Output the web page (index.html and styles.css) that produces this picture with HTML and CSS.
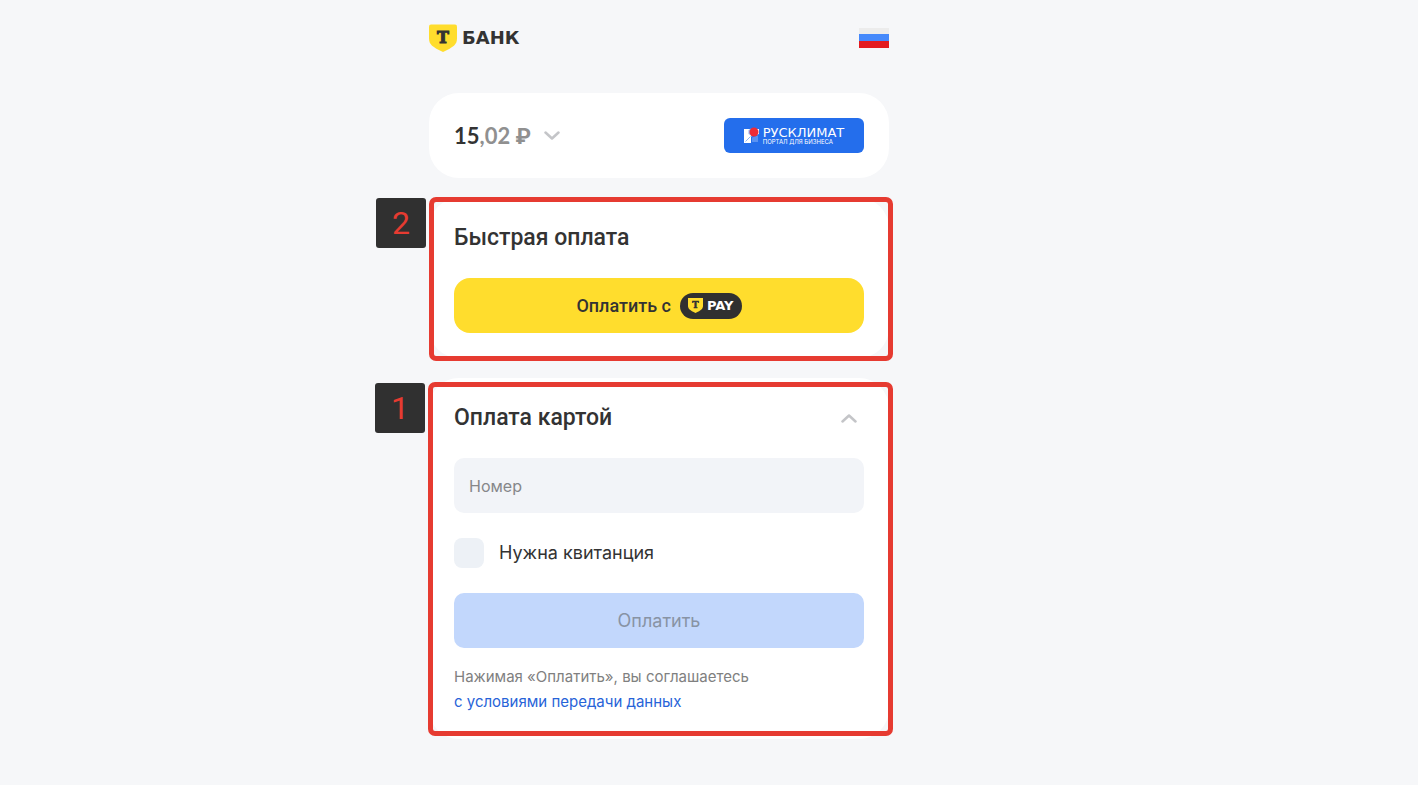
FILE: index.html
```html
<!DOCTYPE html>
<html lang="ru">
<head>
    <meta charset="UTF-8">
    <meta name="viewport" content="width=device-width, initial-scale=1.0">
    <title>Оплата</title>
    <link rel="stylesheet" href="styles.css">
</head>
<body>
    <div class="page">
        <header class="header">
            <a href="#" class="logo">
                <svg class="logo-shield" viewBox="0 0 28 28" aria-hidden="true">
                    <path d="M2 0.5H26Q28 0.5 28 2.5V14.5C28 20.5 24.5 23 14 28C3.5 23 0 20.5 0 14.5V2.5Q0 0.5 2 0.5Z" fill="#ffdd2d"/>
                    <text x="14" y="19" class="shield-letter">T</text>
                </svg>
                <span class="logo-name">БАНК</span>
            </a>
            <button class="lang-button" aria-label="Русский">
                <svg class="flag" viewBox="0 0 30 20">
                    <rect width="30" height="7" fill="#ececec"/>
                    <rect y="6" width="30" height="7" fill="#4589fb"/>
                    <rect y="13" width="30" height="7" fill="#e31b20"/>
                </svg>
            </button>
        </header>

        <main class="cards">
            <!-- Order summary -->
            <section class="card summary">
                <button class="amount">
                    <span class="sum">15<span class="kopeks">,02 ₽</span></span>
                    <svg class="chevron" viewBox="0 0 16 9" aria-hidden="true">
                        <path d="M1.5 1.5L8 7.5L14.5 1.5"/>
                    </svg>
                </button>
                <div class="merchant">
                    <svg class="merchant-icon" viewBox="0 0 16 17" aria-hidden="true">
                        <path d="M0 2H15V16H0Z" fill="#fff"/>
                        <path d="M7 9.5L15 7V16H7Z" fill="#246eec"/>
                        <path d="M8 10.5L14 8.5V15H8Z" fill="#5a92f2"/>
                        <path d="M1.5 14.5L6.5 9.5" stroke="#8fb5f6" fill="none"/>
                        <path d="M4.5 3L7 1.5L8 9L4.5 7Z" fill="#8fb5f6"/>
                        <circle cx="10" cy="5" r="4.5" fill="#ef2b36"/>
                    </svg>
                    <div class="merchant-text">
                        <span class="merchant-name">РУСКЛИМАТ</span>
                        <span class="merchant-note">ПОРТАЛ ДЛЯ БИЗНЕСА</span>
                    </div>
                </div>
            </section>

            <!-- Fast payment -->
            <section class="card marked marked-fast">
                <span class="step">2</span>
                <h2>Быстрая оплата</h2>
                <button class="tpay-button">
                    Оплатить с
                    <span class="tpay">
                        <svg class="tpay-shield" viewBox="0 0 28 28" aria-hidden="true">
                            <path d="M0 0H28V14.5C28 20.5 24.5 23 14 28C3.5 23 0 20.5 0 14.5Z" fill="#ffdd2d"/>
                            <text x="14" y="19" class="shield-letter">T</text>
                        </svg>
                        PAY
                    </span>
                </button>
            </section>

            <!-- Card payment -->
            <section class="card marked marked-card">
                <span class="step">1</span>
                <div class="card-head">
                    <h2>Оплата картой</h2>
                    <button class="collapse" aria-label="Свернуть">
                        <svg class="chevron" viewBox="0 0 16 9" aria-hidden="true">
                            <path d="M1.5 7.5L8 1.5L14.5 7.5"/>
                        </svg>
                    </button>
                </div>
                <form class="pay-form">
                    <input type="text" class="card-number" placeholder="Номер" aria-label="Номер">
                    <label class="receipt">
                        <input type="checkbox" class="receipt-box">
                        Нужна квитанция
                    </label>
                    <button type="submit" class="pay-button" disabled>Оплатить</button>
                </form>
                <p class="terms">Нажимая «Оплатить», вы соглашаетесь<br><a href="#">с условиями передачи данных</a></p>
            </section>
        </main>
    </div>
</body>
</html>
```
FILE: styles.css
```css
* {
    margin: 0;
    padding: 0;
    box-sizing: border-box;
}

body {
    background: #f6f7f9;
    font-family: Inter, 'Liberation Sans', sans-serif;
    color: #333;
    min-height: 100vh;
}

button {
    border: none;
    background: none;
    font-family: inherit;
    color: inherit;
    cursor: pointer;
}

.page {
    padding: 24px 100px 40px 0;
}

.header,
.cards {
    width: 100%;
    max-width: 460px;
    margin: 0 auto;
}

.header {
    display: flex;
    justify-content: space-between;
    align-items: center;
    margin-bottom: 41px;
}

.logo {
    display: flex;
    align-items: center;
    gap: 5px;
    color: #333;
    text-decoration: none;
}

.logo-shield {
    width: 28px;
    height: 28px;
}

.shield-letter {
    font: bold 16px 'DejaVu Serif', serif;
    fill: #333;
    stroke: #333;
    stroke-width: 1;
    text-anchor: middle;
}

.logo-name {
    font: bold 18px/28px 'DejaVu Sans', sans-serif;
}

.lang-button,
.flag {
    display: block;
    width: 30px;
    height: 20px;
}

.cards {
    display: flex;
    flex-direction: column;
    gap: 20px;
}

.card {
    background: #fff;
    border-radius: 30px;
    padding: 25px;
}

.summary {
    display: flex;
    justify-content: space-between;
    align-items: center;
}

.amount {
    display: flex;
    align-items: center;
    gap: 13px;
}

.sum {
    font: bold 22px Lato, Roboto, sans-serif;
}

.kopeks {
    color: #909090;
}

.chevron {
    width: 16px;
    height: 9px;
    fill: none;
    stroke: #c4c5c8;
    stroke-width: 2.5;
    stroke-linecap: round;
    stroke-linejoin: round;
}

.merchant {
    display: flex;
    align-items: center;
    justify-content: center;
    gap: 3px;
    width: 140px;
    height: 35px;
    border-radius: 6px;
    background: #246eec;
    color: #fff;
}

.merchant-icon {
    width: 16px;
    height: 17px;
}

.merchant-text {
    display: flex;
    flex-direction: column;
}

.merchant-name {
    font: 13px/12px 'DejaVu Sans', sans-serif;
}

.merchant-note {
    font-size: 6px;
    line-height: 6px;
}

/* Highlighted steps */
.marked {
    position: relative;
}

.marked::after {
    content: '';
    position: absolute;
    border: 5px solid #e63b31;
    border-radius: 7px;
    pointer-events: none;
}

.marked-fast::after {
    inset: -1px -4px -3px 0;
}

.marked-card::after {
    inset: 4px -4px 3px -1px;
}

.step {
    position: absolute;
    width: 50px;
    height: 50px;
    border-radius: 3px;
    background: #303030;
    color: #e63b31;
    font: 32px/50px Roboto, sans-serif;
    text-align: center;
}

.marked-fast .step {
    top: 0;
    left: -53px;
}

.marked-card .step {
    top: 5px;
    left: -54px;
}

h2 {
    font: 500 23px/30px Roboto, sans-serif;
}

.tpay-button {
    display: flex;
    align-items: center;
    justify-content: center;
    gap: 9px;
    width: 100%;
    height: 55px;
    margin-top: 25px;
    border-radius: 16px;
    background: #ffdd2d;
    font: 500 18px Roboto, sans-serif;
}

.tpay {
    display: flex;
    align-items: center;
    gap: 4px;
    height: 26px;
    padding: 0 8px;
    border-radius: 13px;
    background: #303030;
    color: #fff;
    font: bold 13px 'DejaVu Sans', sans-serif;
}

.tpay-shield {
    width: 15px;
    height: 15px;
}

.card-head {
    display: flex;
    justify-content: space-between;
    align-items: center;
}

.collapse {
    display: flex;
    padding: 7px;
}

.pay-form {
    display: flex;
    flex-direction: column;
    gap: 25px;
    margin-top: 25px;
}

.card-number {
    width: 100%;
    height: 55px;
    padding: 0 15px;
    border: none;
    border-radius: 10px;
    background: #f2f4f8;
    font: 16px Inter, sans-serif;
}

.card-number::placeholder {
    color: #86878a;
}

.receipt {
    display: flex;
    align-items: center;
    gap: 15px;
    font-size: 18px;
    line-height: 30px;
}

.receipt-box {
    appearance: none;
    width: 30px;
    height: 30px;
    border-radius: 8px;
    background: #edf1f6;
}

.receipt-box:checked {
    background: #4589fb;
}

.pay-button {
    width: 100%;
    height: 55px;
    border-radius: 10px;
    background: #c2d7fc;
    color: #8893a4;
    font-size: 18px;
}

.terms {
    margin-top: 16px;
    font-size: 15px;
    line-height: 25px;
    color: #808080;
}

.terms a {
    color: #2763d8;
    text-decoration: none;
}
```
